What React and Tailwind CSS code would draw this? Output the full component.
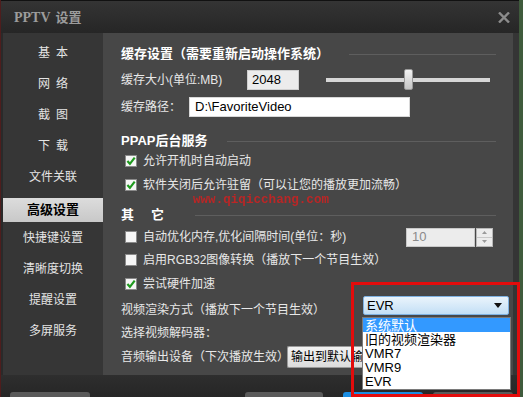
import React from "react";

function Check({ on }) {
  return (
    <span className="flex h-[12px] w-[12px] shrink-0 items-center justify-center border border-[#8a8a8a] bg-[#f6f6f6]">
      {on && (
        <svg width="10" height="10" viewBox="0 0 10 10">
          <path d="M1.4 5 L3.9 7.8 L8.7 1.6" fill="none" stroke="#1f9a1f" strokeWidth="2.2" />
        </svg>
      )}
    </span>
  );
}

function CheckRow({ on, children, className = "" }) {
  return (
    <div className={`flex h-[20px] items-center pl-[4px] ${className}`}>
      <Check on={on} />
      <span className="ml-[6px] whitespace-nowrap">{children}</span>
    </div>
  );
}

function Heading({ children, gap = "gap-[20px]", className = "" }) {
  return (
    <div className={`flex h-[20px] items-center ${gap} ${className}`}>
      <span className="whitespace-nowrap text-[13px] font-bold text-white">{children}</span>
      <span className="h-px flex-1 bg-[#5e5e5e]" />
    </div>
  );
}

const menu = ["基本", "网络", "截图", "下载", "文件关联"];
const menu2 = ["快捷键设置", "清晰度切换", "提醒设置", "多屏服务"];
const options = ["系统默认", "旧的视频渲染器", "VMR7", "VMR9", "EVR"];

export default function App() {
  return (
    <div className="relative flex h-[397px] w-[523px] overflow-hidden bg-[#3f5b3c] font-['Liberation_Sans','Noto_Sans_CJK_SC',sans-serif] text-[12px] text-[#e8e8e8]">
      <div className="w-px bg-[#4e1d1d]" />
      <div className="flex w-[518px] flex-col bg-[#292929]">
        {/* Title bar */}
        <div className="flex h-[33px] items-center justify-between border-t border-[#111] bg-[linear-gradient(to_bottom,#343434,#262626)] pl-[13px] pr-[9px]">
          <div className="flex items-baseline gap-[5px] font-bold text-[#9c9c9c]">
            <span className="font-['Liberation_Serif',serif] text-[14px]">PPTV</span>
            <span className="text-[13px]">设置</span>
          </div>
          <svg width="12" height="11" viewBox="0 0 12 11">
            <path d="M1 0.5 L11 10.5 M11 0.5 L1 10.5" stroke="#8c8c8c" strokeWidth="2.4" />
          </svg>
        </div>

        {/* Body */}
        <div className="flex h-[342px]">
          <div className="w-[2px] bg-[#2a2a2a]" />
          <div className="flex w-[100px] flex-col bg-[#363636] pt-[4px] text-[12px] text-[#e4e4e4]">
            {menu.map((m) => (
              <div key={m} className="flex h-[31px] items-center justify-center gap-[6px]">
                {m.length === 2 ? (
                  <>
                    <span>{m[0]}</span>
                    <span>{m[1]}</span>
                  </>
                ) : (
                  <span>{m}</span>
                )}
              </div>
            ))}
            <div className="mt-[6px] flex h-[24px] items-center justify-center bg-[linear-gradient(to_bottom,#dcdcdc,#c8c8c8)] text-[13px] font-bold text-black">
              高级设置
            </div>
            {menu2.map((m) => (
              <div key={m} className="flex h-[31px] items-center justify-center">
                {m}
              </div>
            ))}
          </div>

          <div className="flex w-[410px] flex-col bg-[#474747] pl-[18px] pr-[17px] pt-[11px]">
            <Heading>缓存设置（需要重新启动操作系统）</Heading>

            <div className="mt-[5px] flex h-[22px] items-center">
              <span className="w-[126px] shrink-0 whitespace-nowrap">缓存大小(单位:MB)</span>
              <div className="flex h-[20px] w-[52px] shrink-0 items-center border border-[#cfcfcf] bg-[#ececec] pl-[4px] text-[13px] text-black">
                2048
              </div>
              <div className="relative ml-[27px] h-[4px] w-[164px] shrink-0 bg-[#d6d6d6]">
                <div className="absolute left-[78px] top-[-9px] h-[21px] w-[9px] rounded-[2px] border border-[#9a9a9a] bg-[linear-gradient(to_bottom,#f2f2f2,#c4c4c4)]" />
              </div>
            </div>

            <div className="mt-[5px] flex h-[22px] items-center">
              <span className="w-[68px] shrink-0">缓存路径：</span>
              <div className="flex h-[20px] w-[221px] shrink-0 items-center border border-[#d8d8d8] bg-white pl-[5px] text-[13px] text-black">
                D:\FavoriteVideo
              </div>
            </div>

            <Heading className="mt-[13px]">PPAP后台服务</Heading>
            <CheckRow on>允许开机时自动启动</CheckRow>
            <CheckRow on className="mt-[4px]">
              软件关闭后允许驻留（可以让您的播放更加流畅）
            </CheckRow>

            <Heading className="mt-[10px]" gap="gap-[31px]">
              <span>其</span>
              <span className="ml-[17px]">它</span>
            </Heading>

            <div className="mt-[2px] flex h-[20px] items-center">
              <CheckRow>自动优化内存,优化间隔时间(单位：秒)</CheckRow>
              <div className="ml-auto mr-[3px] flex h-[19px] items-stretch">
                <div className="flex w-[69px] items-center border border-[#c8c8c8] bg-[#ececec] pl-[5px] text-[13px] text-[#8a8a8a]">
                  10
                </div>
                <div className="ml-px flex w-[17px] flex-col border border-[#b8b8b8] bg-[#ececec]">
                  <div className="flex flex-1 items-center justify-center border-b border-[#c8c8c8]">
                    <svg width="5" height="3" viewBox="0 0 5 3"><path d="M0 3 L2.5 0 L5 3Z" fill="#9a9a9a" /></svg>
                  </div>
                  <div className="flex flex-1 items-center justify-center">
                    <svg width="5" height="3" viewBox="0 0 5 3"><path d="M0 0 L2.5 3 L5 0Z" fill="#9a9a9a" /></svg>
                  </div>
                </div>
              </div>
            </div>
            <CheckRow className="mt-[3px]">启用RGB32图像转换（播放下一个节目生效）</CheckRow>
            <CheckRow on className="mt-[4px]">尝试硬件加速</CheckRow>

            <div className="mt-[2px] flex h-[24px]">
              <span className="flex h-[20px] w-[242px] shrink-0 items-center self-end whitespace-nowrap">
                视频渲染方式（播放下一个节目生效）
              </span>
              <div className="relative h-[19px] w-[146px] shrink-0 self-start">
                <div className="flex h-full items-center justify-between rounded-[2px] border border-[#7fb2e2] bg-[linear-gradient(to_bottom,#eaf4fc,#c3dff5)] pl-[3px] pr-[6px] text-[13px] text-black">
                  <span>EVR</span>
                  <svg width="8" height="5" viewBox="0 0 8 5"><path d="M0 0 L8 0 L4 5Z" fill="#111" /></svg>
                </div>
                <div className="absolute left-[-1px] top-[21px] z-10 flex h-[73px] w-[149px] flex-col border border-[#7a7a7a] bg-white text-[13px] leading-none text-black">
                  {options.map((o, i) => (
                    <div
                      key={o}
                      className={`flex h-[14.2px] items-center overflow-hidden pl-[2px] ${i === 0 ? "bg-[#3399ff] text-white" : ""}`}
                    >
                      {o}
                    </div>
                  ))}
                </div>
              </div>
            </div>

            <div className="mt-[3px] flex h-[20px] items-center">选择视频解码器：</div>

            <div className="mt-[3px] flex h-[22px] items-center">
              <span className="w-[166px] shrink-0 whitespace-nowrap">音频输出设备（下次播放生效）</span>
              <div className="flex h-[22px] w-[75px] shrink-0 items-center overflow-hidden whitespace-nowrap rounded-l-[2px] border border-r-0 border-[#9a9a9a] bg-[linear-gradient(to_bottom,#f2f2f2,#dcdcdc)] pl-[3px] text-[12px] text-black">
                输出到默认输
              </div>
            </div>
          </div>
          <div className="w-[6px] bg-[#353535]" />
        </div>

        {/* Bottom bar */}
        <div className="flex h-[22px] items-end bg-[linear-gradient(to_bottom,#2e2e2e,#262626)] pl-[9px]">
          <div className="h-[5px] w-[80px] rounded-t-[3px] bg-[#5a5a5a]" />
          <div className="ml-[155px] h-[5px] w-[78px] rounded-t-[3px] bg-[#5a5a5a]" />
          <div className="ml-[20px] h-[5px] w-[80px] rounded-t-[3px] bg-[#1b8de2]" />
          <div className="ml-[10px] h-[5px] w-[80px] rounded-t-[3px] bg-[#5a5a5a]" />
        </div>
      </div>

      {/* watermark */}
      <div className="pointer-events-none absolute left-[193px] top-[191px] font-['Liberation_Mono',monospace] text-[12.6px] font-bold text-[#d81e1e] opacity-80 blur-[0.3px]">
        www.qiqicchang.com
      </div>

      {/* red highlight box */}
      <div className="pointer-events-none absolute left-[351px] top-[282px] z-20 h-[115px] w-[169px] border-[3px] border-[#e30c0c]" />
    </div>
  );
}
